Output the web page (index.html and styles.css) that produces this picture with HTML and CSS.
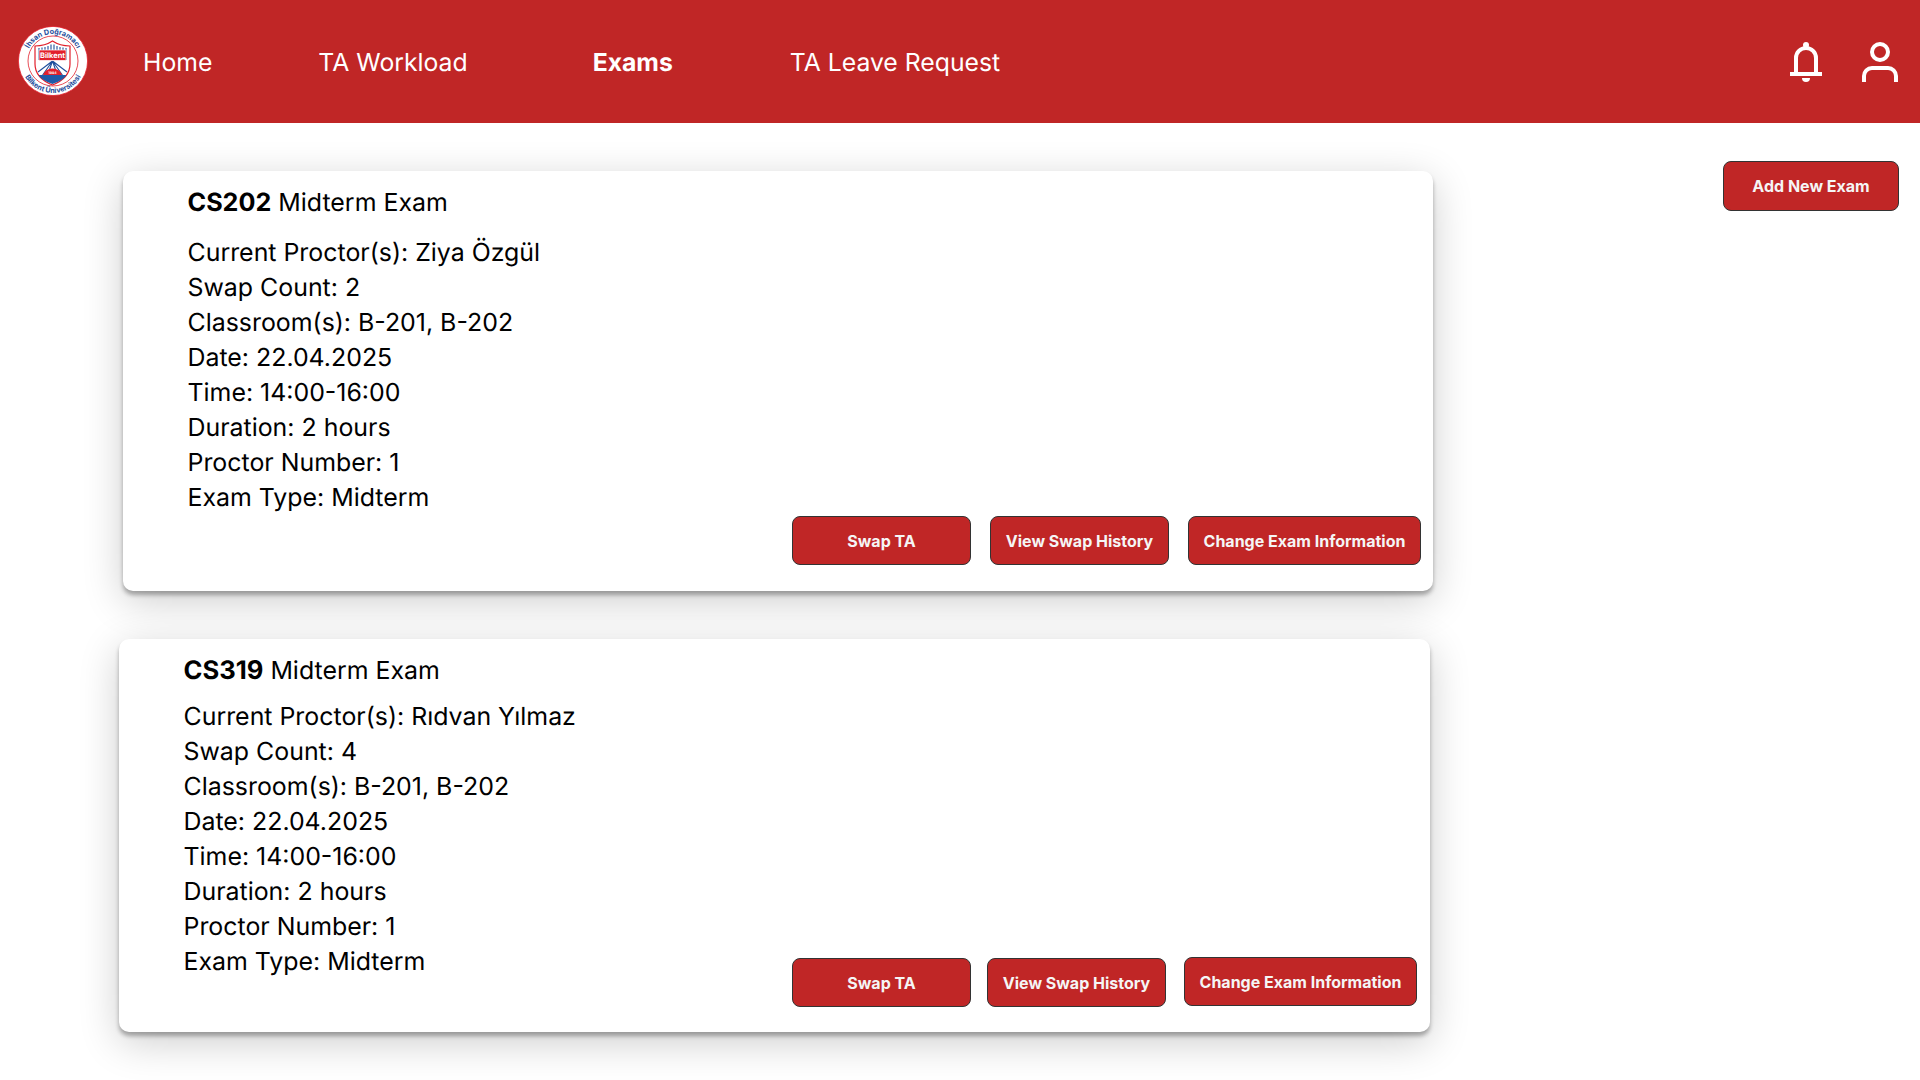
FILE: index.html
```html
<!DOCTYPE html>
<html lang="en">
<head>
    <meta charset="UTF-8">
    <meta name="viewport" content="width=device-width, initial-scale=1.0">
    <title>Exams</title>
    <link rel="stylesheet" href="styles.css">
</head>
<body>
    <header class="topbar">
        <svg class="logo" width="70" height="70" viewBox="0 0 70 70">
            <circle cx="35" cy="35" r="34.6" fill="#fff" stroke="#e2202c" stroke-width="0.8"/>
            <circle cx="35" cy="35" r="25" fill="#fff" stroke="#e2202c" stroke-width="0.8"/>
            <defs>
                <path id="arcTop" d="M8 35 A27 27 0 0 1 62 35"/>
                <path id="arcBottom" d="M3 35 A32 32 0 0 0 67 35"/>
            </defs>
            <text class="logo-ring-text"><textPath href="#arcTop" startOffset="50%" text-anchor="middle">İhsan Doğramacı</textPath></text>
            <text class="logo-ring-text"><textPath href="#arcBottom" startOffset="50%" text-anchor="middle">Bilkent Üniversitesi</textPath></text>
            <path d="M17 20 Q27 20 34.500 15 Q42 20 52 20 V38 Q52 52 34.500 59 Q17 52 17 38 Z" fill="#fff" stroke="#e2202c" stroke-width="1.2"/>
            <g stroke="#1f4e9c" stroke-width="1.1">
                <path d="M21 22 V34 M24 21.500 V34 M27 21 V34 M30 20 V34 M33 18.500 V34 M36 18.500 V34 M39 20 V34 M42 21 V34 M45 21.500 V34 M48 22 V34"/>
                <path d="M34.500 35 L20 46 M34.500 35 L24 50 M34.500 35 L29 51 M34.500 35 L40 51 M34.500 35 L45 50 M34.500 35 L49 46"/>
            </g>
            <path d="M25 49 A10 9.500 0 0 1 44 49 Z" fill="#e2202c"/>
            <path d="M20.500 49 H48.500 Q45 54.500 34.500 58 Q24 54.500 20.500 49 Z" fill="#1f5aa8"/>
            <rect x="21" y="24" width="27" height="10.500" fill="#e2202c" stroke="#fff" stroke-width="0.7"/>
            <text class="logo-label" x="34.500" y="32" text-anchor="middle">Bilkent</text>
            <text class="logo-year" x="34.500" y="47.500" text-anchor="middle">1984</text>
        </svg>
        <nav class="nav">
            <a class="nav-link" href="#">Home</a>
            <a class="nav-link" href="#">TA Workload</a>
            <a class="nav-link nav-link-active" href="#">Exams</a>
            <a class="nav-link" href="#">TA Leave Request</a>
        </nav>
        <div class="topbar-icons">
            <svg width="32" height="40" viewBox="0 0 32 40">
                <circle cx="16" cy="3" r="3" fill="#fff"/>
                <path d="M6 31 V16 a10 10 0 0 1 20 0 V31" fill="none" stroke="#fff" stroke-width="4"/>
                <rect x="0" y="30" width="32" height="4" fill="#fff"/>
                <path d="M12 36 h8 a4 4 0 0 1 -8 0 z" fill="#fff"/>
            </svg>
            <svg width="36" height="40" viewBox="0 0 36 40">
                <circle cx="18" cy="10" r="8" fill="none" stroke="#fff" stroke-width="4"/>
                <path d="M2 40 V34 a8 8 0 0 1 8 -8 h16 a8 8 0 0 1 8 8 V40" fill="none" stroke="#fff" stroke-width="4"/>
            </svg>
        </div>
    </header>

    <main class="content">
        <div class="exam-list">
            <section class="exam-card exam-card-first">
                <div class="exam-details">
                    <h2 class="exam-title"><b>CS202</b> Midterm Exam</h2>
                    <p>Current Proctor(s): Ziya Özgül</p>
                    <p>Swap Count: 2</p>
                    <p>Classroom(s): B-201, B-202</p>
                    <p>Date: 22.04.2025</p>
                    <p>Time: 14:00-16:00</p>
                    <p>Duration: 2 hours</p>
                    <p>Proctor Number: 1</p>
                    <p>Exam Type: Midterm</p>
                </div>
                <div class="exam-actions">
                    <button class="btn btn-swap">Swap TA</button>
                    <button class="btn btn-swap">View Swap History</button>
                    <button class="btn btn-change">Change Exam Information</button>
                </div>
            </section>

            <section class="exam-card exam-card-second">
                <div class="exam-details">
                    <h2 class="exam-title"><b>CS319</b> Midterm Exam</h2>
                    <p>Current Proctor(s): Rıdvan Yılmaz</p>
                    <p>Swap Count: 4</p>
                    <p>Classroom(s): B-201, B-202</p>
                    <p>Date: 22.04.2025</p>
                    <p>Time: 14:00-16:00</p>
                    <p>Duration: 2 hours</p>
                    <p>Proctor Number: 1</p>
                    <p>Exam Type: Midterm</p>
                </div>
                <div class="exam-actions">
                    <button class="btn btn-swap">Swap TA</button>
                    <button class="btn btn-swap">View Swap History</button>
                    <button class="btn btn-change">Change Exam Information</button>
                </div>
            </section>
        </div>
        <button class="btn btn-add">Add New Exam</button>
    </main>
</body>
</html>
```

FILE: styles.css
```css
* {
    box-sizing: border-box;
}

body {
    margin: 0;
    min-height: 100vh;
    font-family: Inter, "Liberation Sans", sans-serif;
    background-color: #fff;
    color: #000;
    text-rendering: geometricPrecision;
}

.topbar {
    display: flex;
    align-items: center;
    height: 123px;
    padding: 0 22px 0 18px;
    background-color: #c02626;
}

.logo {
    flex-shrink: 0;
    margin-top: -1px;
}

.logo-ring-text {
    font-size: 7.2px;
    font-weight: 700;
    fill: #1f4e9c;
}

.logo-label {
    font-size: 7.500px;
    font-weight: 700;
    fill: #fff;
}

.logo-year {
    font-size: 3.500px;
    font-weight: 700;
    fill: #fff;
}

.nav {
    display: flex;
    margin-left: 55px;
    gap: 106px;
}

.nav-link {
    color: #fff;
    font-size: 24.750px;
    text-decoration: none;
}

.nav-link-active {
    margin: 0 11px 0 19px;
    font-weight: 700;
}

.topbar-icons {
    display: flex;
    align-items: center;
    gap: 40px;
    margin-left: auto;
    margin-top: 1px;
}

.content {
    display: flex;
    align-items: flex-start;
    padding: 48px 21px 48px 123px;
}

.exam-list {
    display: flex;
    flex-direction: column;
    gap: 48px;
}

.exam-card {
    display: flex;
    justify-content: space-between;
    width: 1310px;
    padding: 15px 12px 26px 64.500px;
    background-color: #fff;
    border-radius: 10px;
    box-shadow: 0 4px 4px rgba(0, 0, 0, 0.3), 0 10px 40px rgba(0, 0, 0, 0.2);
}

.exam-card-first {
    height: 420px;
}

.exam-card-second {
    height: 393px;
    width: 1311px;
    margin-left: -4px;
    padding-top: 14px;
    padding-right: 13px;
    padding-bottom: 25px;
}

.exam-details p {
    margin: 0;
    font-size: 24.900px;
    line-height: 35px;
}

.exam-title {
    margin: 0 0 15px;
    font-size: 24.900px;
    font-weight: 400;
    line-height: 35px;
}

.exam-title b {
    font-size: 25.200px;
    font-weight: 700;
}

.exam-card-second .exam-title {
    margin-bottom: 11px;
}

.exam-card-second .exam-title b {
    font-size: 25.600px;
}

.exam-actions {
    display: flex;
    align-self: flex-end;
    align-items: flex-start;
    gap: 19px;
}

.exam-card-second .exam-actions {
    gap: 16px;
}

.exam-card-second .btn-change {
    margin: -1px 0 0 2px;
}

.btn {
    height: 49px;
    padding: 0;
    color: #f5f5f5;
    font-family: inherit;
    font-size: 16px;
    font-weight: 700;
    background-color: #c02626;
    border: 1px solid #333;
    border-radius: 8px;
    cursor: pointer;
}

.btn-swap {
    width: 179px;
}

.btn-change {
    width: 233px;
}

.btn-add {
    flex-shrink: 0;
    width: 176px;
    height: 50px;
    margin-top: -10px;
    margin-left: auto;
}
```
